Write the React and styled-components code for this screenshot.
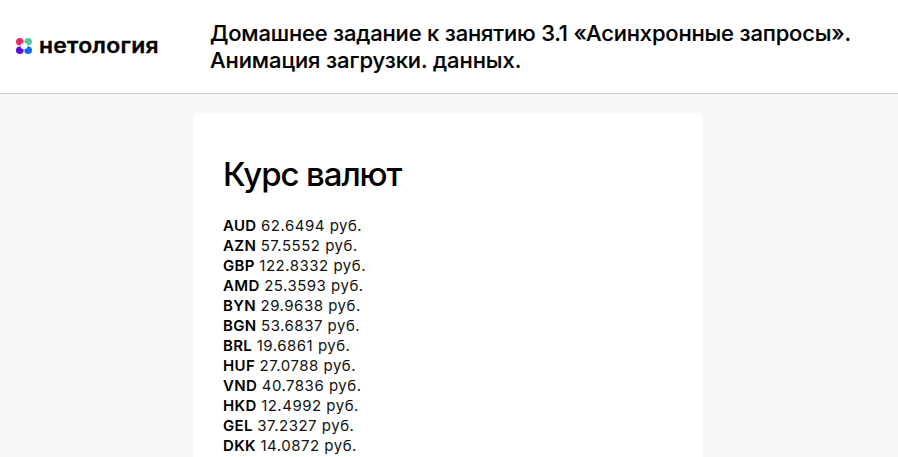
import React from "react";
import styled, { createGlobalStyle } from "styled-components";

const GlobalStyle = createGlobalStyle`
  * { box-sizing: border-box; }
  html, body { margin: 0; }
  body { background: #f6f8fa; color: #000; font-family: Inter, sans-serif; }
`;

const Page = styled.div`
  display: flex;
  flex-direction: column;
  height: 100vh;
  overflow: hidden;
`;

const Header = styled.header`
  display: flex;
  flex: none;
  height: 94px;
  padding: 20px 16px 0;
  background: #fff;
  border-bottom: 1px solid #c8c8c8;
`;

const Brand = styled.div`
  display: flex;
  align-items: center;
  gap: 7px;
  width: 194px;
  height: 50px;
`;

const BrandMark = styled.svg`
  display: block;
  flex: none;
  margin-top: 2px;
`;

const BrandName = styled.span`
  margin-top: 1px;
  font-size: 20.5px;
  font-weight: 600;
  line-height: 24px;
  letter-spacing: 0.2px;
  transform: scaleX(1.12);
  transform-origin: left;
  -webkit-text-stroke: 0.3px #000;
`;

const Title = styled.h1`
  margin: 0;
  font-size: 22px;
  font-weight: 500;
  line-height: 27px;
  letter-spacing: -0.18px;
  white-space: nowrap;
  -webkit-text-stroke: 0.15px #000;
`;

const TitleLine = styled.span`
  display: block;
  letter-spacing: ${({ $tracking }) => $tracking};
`;

const Card = styled.main`
  flex: 1;
  min-height: 0;
  width: 510px;
  margin: 20px 0 0 193px;
  padding: 40px 30px 0;
  border-radius: 5px 5px 0 0;
  background: #fff;
`;

const CardTitle = styled.h2`
  margin: 0 0 22px;
  font-size: 33px;
  font-weight: 500;
  line-height: 40px;
  letter-spacing: -1.1px;
`;

const Row = styled.div`
  display: flex;
  gap: 4.5px;
  height: 20px;
  line-height: 20px;
  white-space: nowrap;
`;

const Code = styled.span`
  font-size: 15px;
  font-weight: 600;
  letter-spacing: 0.35px;
`;

const Value = styled.span`
  color: #111;
  font-size: 15px;
  font-weight: 400;
  letter-spacing: 0.5px;
`;

const rates = [
  ["AUD", "62.6494"],
  ["AZN", "57.5552"],
  ["GBP", "122.8332"],
  ["AMD", "25.3593"],
  ["BYN", "29.9638"],
  ["BGN", "53.6837"],
  ["BRL", "19.6861"],
  ["HUF", "27.0788"],
  ["VND", "40.7836"],
  ["HKD", "12.4992"],
  ["GEL", "37.2327"],
  ["DKK", "14.0872"],
];

export default function App() {
  return (
    <>
      <GlobalStyle />
      <Page>
        <Header>
          <Brand>
            <BrandMark width="16" height="16" viewBox="0 0 16 16">
              <circle cx="3.800" cy="3.800" r="3.800" fill="#e62b68" />
              <circle cx="12.200" cy="3.800" r="3.800" fill="#55cba0" />
              <circle cx="3.800" cy="12.200" r="3.800" fill="#5a0be0" />
              <circle cx="12.200" cy="12.200" r="3.800" fill="#1268f2" />
              <circle cx="8" cy="8" r="3.300" fill="#fff" />
            </BrandMark>
            <BrandName>нетология</BrandName>
          </Brand>
          <Title>
            <TitleLine $tracking="-0.18px">
              Домашнее задание к занятию 3.1 «Асинхронные запросы».
            </TitleLine>
            <TitleLine $tracking="-0.08px">Анимация загрузки. данных.</TitleLine>
          </Title>
        </Header>
        <Card>
          <CardTitle>Курс валют</CardTitle>
          {rates.map(([code, value]) => (
            <Row key={code}>
              <Code>{code}</Code>
              <Value>{value} руб.</Value>
            </Row>
          ))}
        </Card>
      </Page>
    </>
  );
}
